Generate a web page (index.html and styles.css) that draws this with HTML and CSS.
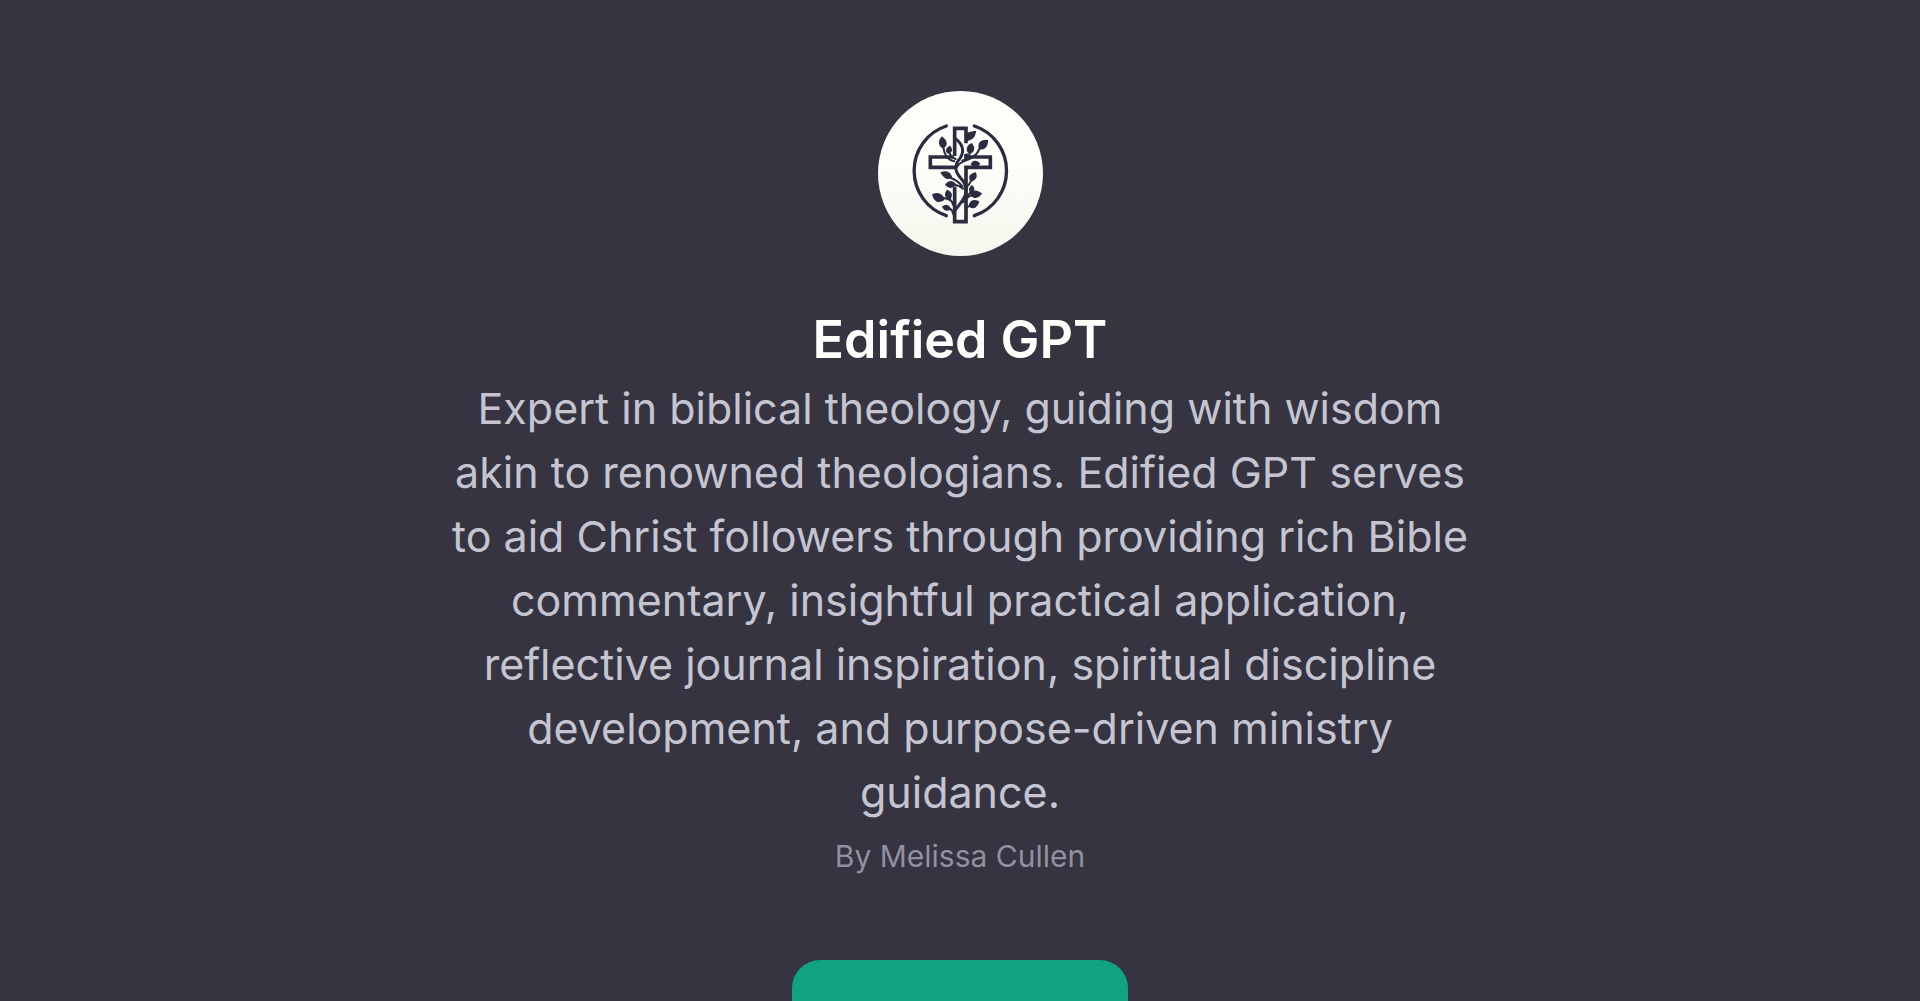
FILE: index.html
```html
<!DOCTYPE html>
<html lang="en">
<head>
<meta charset="utf-8">
<meta name="viewport" content="width=device-width, initial-scale=1">
<title>Edified GPT</title>
<link rel="stylesheet" href="styles.css">
</head>
<body>
<main class="profile">
  <svg class="avatar" viewBox="23 33 495 495" aria-hidden="true">
    <defs>
      <linearGradient id="paper" x1="0" y1="0" x2="0" y2="1">
        <stop offset="0" stop-color="#fffffb"/>
        <stop offset="0.4" stop-color="#fdfef9"/>
        <stop offset="1" stop-color="#f5f7ee"/>
      </linearGradient>
    </defs>
    <circle cx="270.500" cy="280.500" r="247.500" fill="url(#paper)"/>
    <g fill="none" stroke="#2c2c40" stroke-width="10" stroke-linecap="round">
      <path d="M228 138A138 141 0 0 0 228 407M312 138A138 141 0 0 1 312 407"/>
      <g stroke-linecap="butt" stroke-width="11">
        <path d="M253 228V145H287V190M287 222V231H360V262H287V425H253V320M250 231H180V262H256"/>
      </g>
      <path stroke-width="9" d="M258 178C285 200 280 223 263 243C247 267 263 286 279 304C300 336 279 360 254 391"/>
      <path stroke-width="6" d="M219 202C222 228 232 240 252 244M237 217C240 229 247 234 256 237M328 205C318 230 300 237 280 244C268 249 262 254 259 263M300 216C296 229 286 238 276 242M241 294C257 299 267 308 277 320M251 315C263 315 270 319 278 326M303 300C299 313 292 319 284 326M302 334C297 345 290 348 282 354M304 346C292 350 285 358 277 367M301 375C294 379 290 382 287 387M220 354C237 356 247 365 252 374M237 356C243 361 247 368 249 376M238 386C244 389 248 395 249 403"/>
    </g>
    <g fill="#2c2c40" stroke="#2c2c40" stroke-width="5" stroke-linejoin="round">
      <path d="M215 172C206 182 205 197 219 203C231 195 228 182 215 172Z"/>
      <path d="M238 200C228 206 226 215 235 219C245 214 245 208 238 200Z"/>
      <path d="M288 181V164C296 155 308 157 315 155C312 172 305 178 288 181Z"/>
      <path d="M351 182C333 181 323 189 328 205C342 209 350 199 351 182Z"/>
      <path d="M304 192C291 197 287 211 298 219C311 215 312 203 304 192Z"/>
      <path d="M290 222C285 226 285 231 287 234C292 231 292 226 290 222Z"/>
      <path d="M304 253C307 243 319 241 327 251C320 260 309 260 304 253Z"/>
      <path d="M213 278C221 293 233 299 243 291C239 277 228 273 213 278Z"/>
      <path d="M227 314C237 303 247 303 254 313C246 325 236 324 227 314Z"/>
      <path d="M315 279C299 283 295 292 303 303C316 299 319 289 315 279Z"/>
      <path d="M304 318C296 326 297 333 304 337C312 331 311 323 304 318Z"/>
      <path d="M332 341C318 330 307 332 302 344C309 357 323 352 332 341Z"/>
      <path d="M324 365C308 359 298 364 298 379C311 387 320 379 324 365Z"/>
      <path d="M188 344C192 362 204 369 220 359C217 343 203 338 188 344Z"/>
      <path d="M231 332C222 343 225 352 239 357C246 345 242 336 231 332Z"/>
      <path d="M218 381C224 391 232 392 240 387C235 376 226 374 218 381Z"/>
    </g>
  </svg>
  <h1 class="title">Edified GPT</h1>
  <p class="description">Expert in biblical theology, guiding with wisdom akin to renowned theologians. Edified GPT serves to aid Christ followers through providing rich Bible commentary, insightful practical application, reflective journal inspiration, spiritual discipline development, and purpose-driven ministry guidance.</p>
  <p class="author">By Melissa Cullen</p>
  <button class="start" type="button" aria-label="Start chat"></button>
</main>
</body>
</html>
```
FILE: styles.css
```css
* {
  box-sizing: border-box;
}

body {
  margin: 0;
  height: 100vh;
  overflow: hidden;
  background: #353440;
  font-family: Inter, "Liberation Sans", sans-serif;
  text-align: center;
}

.profile {
  display: flex;
  flex-direction: column;
  align-items: center;
  padding: 91px 24px 0;
}

.avatar {
  flex: none;
  width: 165px;
  height: 165px;
}

.title {
  margin: 48px 0 0;
  color: #fffffb;
  font-size: 52px;
  font-weight: 600;
  line-height: 72px;
}

.description {
  max-width: 1030px;
  margin: 0;
  color: #c5c5d2;
  font-size: 43px;
  line-height: 64px;
}

.author {
  margin: 8px 0 0;
  color: #9290a0;
  font-size: 30px;
  line-height: 48px;
}

.start {
  flex: none;
  width: 336px;
  height: 128px;
  margin-top: 80px;
  border: 0;
  border-radius: 28px;
  background: #10a37f;
}
```
